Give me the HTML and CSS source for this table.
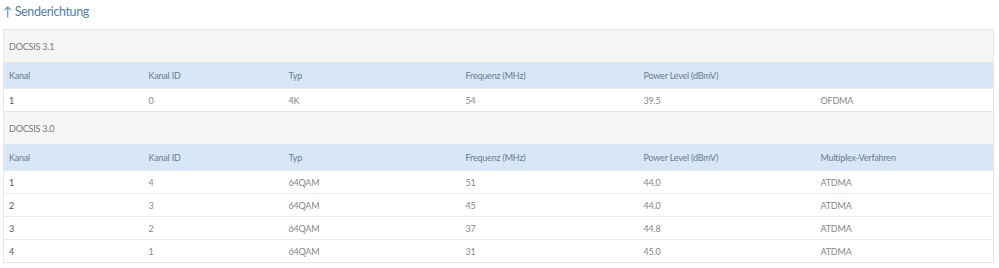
FILE: index.html
```html
<!DOCTYPE html>
<html lang="de">
<head>
<meta charset="utf-8">
<link rel="stylesheet" href="styles.css">
</head>
<body>
<h2 class="title">↑ Senderichtung</h2>
<table class="grid">
  <colgroup>
    <col class="c1"><col class="c2"><col class="c3"><col class="c4"><col class="c5"><col class="c6">
  </colgroup>
  <tr class="section"><td colspan="6">DOCSIS 3.1</td></tr>
  <tr class="head"><td>Kanal</td><td>Kanal ID</td><td>Typ</td><td>Frequenz (MHz)</td><td>Power Level (dBmV)</td><td></td></tr>
  <tr class="row"><td class="first">1</td><td>0</td><td>4K</td><td>54</td><td>39.5</td><td>OFDMA</td></tr>
  <tr class="section"><td colspan="6">DOCSIS 3.0</td></tr>
  <tr class="head"><td>Kanal</td><td>Kanal ID</td><td>Typ</td><td>Frequenz (MHz)</td><td>Power Level (dBmV)</td><td>Multiplex-Verfahren</td></tr>
  <tr class="row"><td class="first">1</td><td>4</td><td>64QAM</td><td>51</td><td>44.0</td><td>ATDMA</td></tr>
  <tr class="row"><td class="first">2</td><td>3</td><td>64QAM</td><td>45</td><td>44.0</td><td>ATDMA</td></tr>
  <tr class="row"><td class="first">3</td><td>2</td><td>64QAM</td><td>37</td><td>44.8</td><td>ATDMA</td></tr>
  <tr class="row"><td class="first">4</td><td>1</td><td>64QAM</td><td>31</td><td>45.0</td><td>ATDMA</td></tr>
</table>
</body>
</html>
```

FILE: styles.css
```css
html, body {
  margin: 0;
  padding: 0;
  background: #ffffff;
}
body {
  font-family: Lato, "Open Sans", sans-serif;
  color: #777;
}
.title {
  margin: 0;
  padding: 4px 0 0 3px;
  height: 29px;
  box-sizing: border-box;
  font-size: 12.5px;
  letter-spacing: -0.4px;
  font-weight: normal;
  color: #4d84ac;
}
.grid {
  margin-left: 3px;
  width: 991px;
  border-collapse: collapse;
  table-layout: fixed;
  font-size: 9px;
  letter-spacing: -0.2px;
  border: 1px solid #e6e6e6;
}
.c1, .c2 { width: 140px; }
.c3, .c5 { width: 177px; }
.c4 { width: 178px; }
.grid td {
  padding: 0 0 0 5px;
  white-space: nowrap;
}
.section td {
  height: 32px;
  background: #f5f5f3;
  color: #7b7b7b;
  border-top: 1px solid #e6e6e6;
}
.head td {
  height: 26px;
  background: #d7e7f6;
  color: #6a7c8c;
}
.row td {
  height: 22px;
  border-top: 1px solid #ebebeb;
  color: #888;
}
.row td.first {
  color: #555;
}
```
